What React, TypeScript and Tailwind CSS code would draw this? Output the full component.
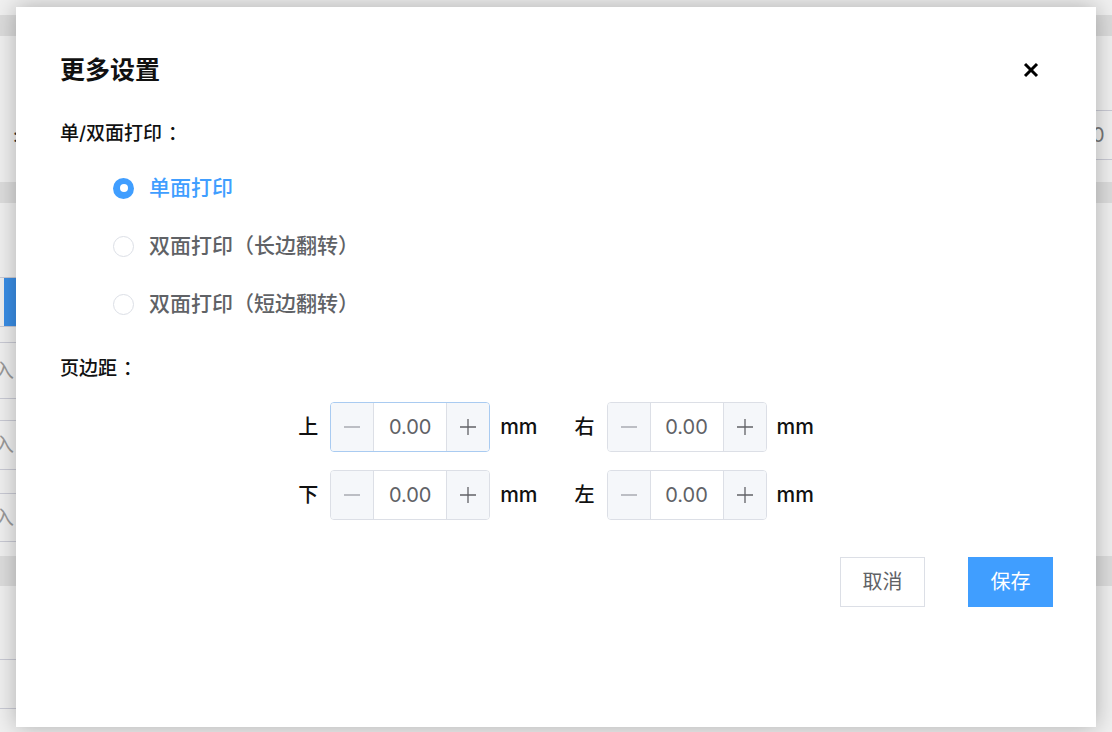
import React from "react";

const FONT = "font-['Inter','Noto_Sans_CJK_SC',sans-serif]";

function Minus() {
  return (
    <svg width="18" height="18" viewBox="0 0 18 18">
      <line x1="1" y1="9" x2="17" y2="9" stroke="#a8abb2" strokeWidth="1.3" />
    </svg>
  );
}
function Plus() {
  return (
    <svg width="18" height="18" viewBox="0 0 18 18">
      <line x1="1" y1="9" x2="17" y2="9" stroke="#606266" strokeWidth="1.3" />
      <line x1="9" y1="1" x2="9" y2="17" stroke="#606266" strokeWidth="1.3" />
    </svg>
  );
}

function NumberInput({ focused }: { focused?: boolean }) {
  return (
    <div
      className={
        "flex h-[50px] w-[160px] rounded-[4px] border overflow-hidden " +
        (focused ? "border-[#a9cbf1]" : "border-[#dcdfe6]")
      }
    >
      <div className="flex w-[43px] items-center justify-center bg-[#f5f7fa] border-r border-[#dcdfe6]">
        <Minus />
      </div>
      <div className="flex flex-1 items-center justify-center text-[20px] text-[#606266]">0.00</div>
      <div className="flex w-[43px] items-center justify-center bg-[#f5f7fa] border-l border-[#dcdfe6]">
        <Plus />
      </div>
    </div>
  );
}

function MarginItem({ label, focused }: { label: string; focused?: boolean }) {
  return (
    <div className="flex items-center">
      <span className="w-[21px] text-[20px] font-medium text-[#111]">{label}</span>
      <span className="w-[11px]" />
      <NumberInput focused={focused} />
      <span className="ml-[10px] text-[21px] font-medium text-[#111]">mm</span>
    </div>
  );
}

function Radio({ label, checked }: { label: string; checked?: boolean }) {
  return (
    <div className="flex h-[58px] items-center pl-[53px]">
      {checked ? (
        <span className="flex h-[21px] w-[21px] items-center justify-center rounded-full bg-[#409eff]">
          <span className="h-[8px] w-[8px] rounded-full bg-white" />
        </span>
      ) : (
        <span className="h-[21px] w-[21px] rounded-full border border-[#dcdfe6] bg-white" />
      )}
      <span
        className={
          "ml-[15px] text-[21px] font-medium " + (checked ? "text-[#409eff]" : "text-[#606266]")
        }
      >
        {label}
      </span>
    </div>
  );
}

function Background() {
  const line = "border-[#c9cad4]";
  return (
    <div className="flex h-[732px] w-[1112px] flex-col bg-[#f0f0f0]">
      <div className="h-[15px]" />
      <div className="h-[21px] bg-[#dcdcdc]" />
      <div className="h-[74px]" />
      <div className="flex h-[50px] items-center justify-between">
        <span className="pl-[13px] text-[18px] text-[#333]">:</span>
        <div className={"flex h-[50px] w-[20px] items-center border-y " + line}>
          <span className="text-[20px] text-[#777]">0</span>
        </div>
      </div>
      <div className="h-[22px]" />
      <div className="h-[21px] bg-[#dddddd]" />
      <div className="h-[74px]" />
      <div className={"flex h-[50px] w-[16px] border-y " + line}>
        <div className="ml-[4px] flex-1 bg-[#3a8ee6]" />
      </div>
      <div className={"h-[16px] w-[16px] border-b " + line} />
      <div className="flex h-[55px] w-[16px] items-center overflow-hidden">
        <span className="-ml-[6px] text-[20px] text-[#999]">入</span>
      </div>
      <div className={"h-[23px] w-[16px] border-y " + line} />
      <div className="flex h-[48px] w-[16px] items-center overflow-hidden">
        <span className="-ml-[6px] text-[20px] text-[#999]">入</span>
      </div>
      <div className={"h-[25px] w-[16px] border-y " + line} />
      <div className="flex h-[47px] w-[16px] items-center overflow-hidden">
        <span className="-ml-[6px] text-[20px] text-[#999]">入</span>
      </div>
      <div className={"h-[15px] w-[16px] border-t " + line} />
      <div className="h-[30px] bg-[#dddddd]" />
      <div className={"h-[74px] w-[16px] border-b " + line} />
      <div className={"h-[49px] w-[16px] border-b " + line} />
    </div>
  );
}

export default function App() {
  return (
    <div className={"relative h-[732px] w-[1112px] overflow-hidden " + FONT}>
      <Background />
      <div className="absolute left-[16px] top-[7px] flex h-[720px] w-[1080px] flex-col bg-white shadow-[0_0_22px_rgba(0,0,0,0.28)]">
        <div className="flex items-center justify-between pl-[44px] pr-[57px] pt-[47px]">
          <span className="text-[25px] font-semibold leading-[32px] text-[#111]">更多设置</span>
          <svg width="16" height="16" viewBox="0 0 16 16">
            <line x1="2" y1="2" x2="14" y2="14" stroke="#000" strokeWidth="3" />
            <line x1="14" y1="2" x2="2" y2="14" stroke="#000" strokeWidth="3" />
          </svg>
        </div>
        <div className="mt-[35px] pl-[44px] text-[19px] font-medium leading-[26px] text-[#111]">
          单/双面打印<span className="pl-[6px]">：</span>
        </div>
        <div className="mt-[12px] flex flex-col pl-[44px]">
          <Radio label="单面打印" checked />
          <Radio label="双面打印（长边翻转）" />
          <Radio label="双面打印（短边翻转）" />
        </div>
        <div className="mt-[23px] pl-[44px] text-[19px] font-medium leading-[26px] text-[#111]">
          页边距<span className="pl-[6px]">：</span>
        </div>
        <div className="mx-auto mt-[20px] grid w-fit grid-cols-2 gap-x-[37px] gap-y-[18px]">
          <MarginItem label="上" focused />
          <MarginItem label="右" />
          <MarginItem label="下" />
          <MarginItem label="左" />
        </div>
        <div className="mt-[37px] flex justify-end gap-[43px] pr-[43px]">
          <button className="h-[50px] w-[85px] border border-[#dcdfe6] bg-white text-[20px] text-[#606266]">
            取消
          </button>
          <button className="h-[50px] w-[85px] bg-[#409eff] text-[20px] text-white">保存</button>
        </div>
      </div>
    </div>
  );
}
